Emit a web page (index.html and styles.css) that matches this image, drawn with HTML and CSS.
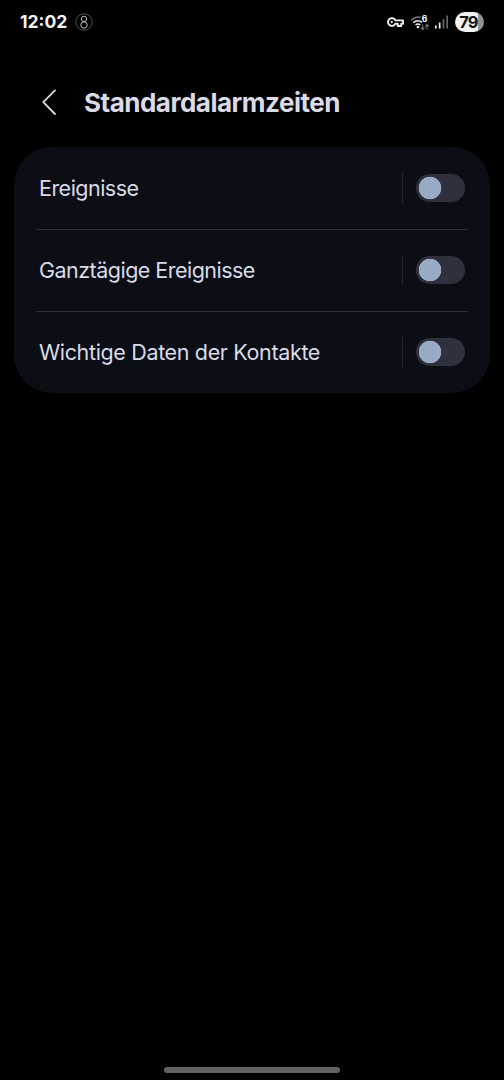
FILE: index.html
```html
<!DOCTYPE html>
<html lang="de">
  <head>
    <meta charset="UTF-8" />
    <meta name="viewport" content="width=device-width, initial-scale=1.0" />
    <title>Standardalarmzeiten</title>
    <link rel="stylesheet" href="styles.css">
  </head>
  <body>
    <div class="status">
      <span class="clock">12:02</span>
      <svg class="ring" width="18" height="18" viewBox="0 0 18 18" fill="none">
        <circle cx="9" cy="9" r="8.2" stroke="#666" stroke-width="0.8" />
        <circle cx="9" cy="5.9" r="2.7" stroke="#bbb" stroke-width="1" />
        <circle cx="9" cy="12" r="3.2" stroke="#bbb" stroke-width="1" />
      </svg>
      <div class="status-icons">
        <svg width="18" height="12" viewBox="0 0 18 12" fill="none" stroke="#f2f2f2" stroke-width="1.9" stroke-linejoin="round">
          <path d="M9.4 4.4H17V7.7H15.2V10H11.8V7.7H9.4A3.9 3.9 0 1 1 9.4 4.4Z" />
          <circle cx="5.7" cy="6" r="0.9" fill="#f2f2f2" stroke-width="0.6" />
        </svg>
        <svg class="wifi" width="21" height="17" viewBox="0 0 21 17" fill="none">
          <path d="M1.2 6.2Q5.4 2.2 10.7 3.2" stroke="#777" stroke-width="1.5" />
          <path d="M3.3 8.7Q7.6 5 12 8.4M5.5 11Q8 9 10.3 11" stroke="#eee" stroke-width="1.6" />
          <circle cx="7.9" cy="13" r="1.3" fill="#eee" />
          <path d="M12.7 10.5V15.4M10.9 13.6L12.7 15.5L14.5 13.6M17 15.5V10.6M15.2 12.4L17 10.5L18.8 12.4" stroke="#777" stroke-width="1.1" />
          <text x="11.8" y="7.6">6</text>
        </svg>
        <svg class="signal" width="14" height="14" viewBox="0 0 14 14">
          <path d="M0 10.5H1.7V13.5H0ZM3.8 7.5H5.5V13.5H3.8Z" fill="#eee" />
          <path d="M7.6 4H9.3V13.5H7.6ZM11.3 0.5H13V13.5H11.3Z" fill="#666" />
        </svg>
        <span class="battery">79</span>
      </div>
    </div>

    <div class="header">
      <svg width="16" height="28" viewBox="0 0 16 28" fill="none" stroke="#d9dbe8" stroke-width="1.8" stroke-linecap="round" stroke-linejoin="round">
        <path d="M14 1.4L2.3 13.2L14 25" />
      </svg>
      <h1>Standardalarmzeiten</h1>
    </div>

    <div class="card">
      <div class="row">
        <span class="label">Ereignisse</span>
        <span class="switch"></span>
      </div>
      <div class="row">
        <span class="label">Ganztägige Ereignisse</span>
        <span class="switch"></span>
      </div>
      <div class="row">
        <span class="label label-long">Wichtige Daten der Kontakte</span>
        <span class="switch"></span>
      </div>
    </div>

    <div class="nav-handle"></div>
  </body>
</html>
```
FILE: styles.css
```css
* {
  box-sizing: border-box;
}
body {
  margin: 0;
  height: 1080px;
  display: flex;
  flex-direction: column;
  background: #000;
  color: #d9dbe8;
  font-family: Inter, sans-serif;
}
svg {
  flex: none;
  display: block;
}

/* status bar */
.status {
  display: flex;
  align-items: center;
  height: 44px;
  padding: 0 20px;
}
.clock {
  width: 47px;
  padding-bottom: 1px;
  color: #f5f5f5;
  font-size: 17.5px;
  font-weight: 700;
  white-space: nowrap;
}
.ring {
  margin-left: 8px;
}
.status-icons {
  display: flex;
  align-items: center;
  margin-left: auto;
}
.wifi {
  margin-left: 6px;
}
.wifi text {
  fill: #fff;
  font-size: 8.5px;
  font-weight: 700;
}
.signal {
  margin-left: 4px;
}
.battery {
  width: 29px;
  height: 20px;
  margin-left: 6px;
  padding-right: 2px;
  border-radius: 10px;
  background: linear-gradient(to right, #f2f2f2 79%, #929292 79%);
  color: #111;
  font-size: 16.5px;
  font-weight: 700;
  line-height: 20px;
  letter-spacing: -0.9px;
  text-align: center;
}

/* title */
.header {
  display: flex;
  align-items: center;
  height: 103px;
  padding: 14px 0 0 41px;
}
h1 {
  margin: 0 0 0 27px;
  font-size: 26px;
  font-weight: 700;
  letter-spacing: -0.5px;
  white-space: nowrap;
}

/* settings list */
.card {
  margin: 0 14px;
  padding: 0 22px;
  border-radius: 38px;
  background: #0b0e15;
}
.row {
  display: flex;
  align-items: center;
  justify-content: space-between;
  height: 82px;
  padding: 0 3px;
}
.row + .row {
  padding-bottom: 1px;
  border-top: 1px solid #2b2e35;
}
.label {
  padding-bottom: 1px;
  font-size: 21.5px;
  letter-spacing: -0.52px;
  white-space: nowrap;
}
.label-long {
  letter-spacing: -0.35px;
}
.switch {
  display: flex;
  align-items: center;
  height: 30px;
  padding-left: 13px;
  border-left: 1px solid #24272e;
}
.switch::before {
  content: "";
  width: 49px;
  height: 28px;
  border-radius: 14px;
  background: radial-gradient(circle at 14px 14px, #99aac5 11px, #2e303e 11.6px);
}

.nav-handle {
  width: 176px;
  height: 6px;
  margin: auto 164px 7px;
  border-radius: 3px;
  background: #636363;
}
```
